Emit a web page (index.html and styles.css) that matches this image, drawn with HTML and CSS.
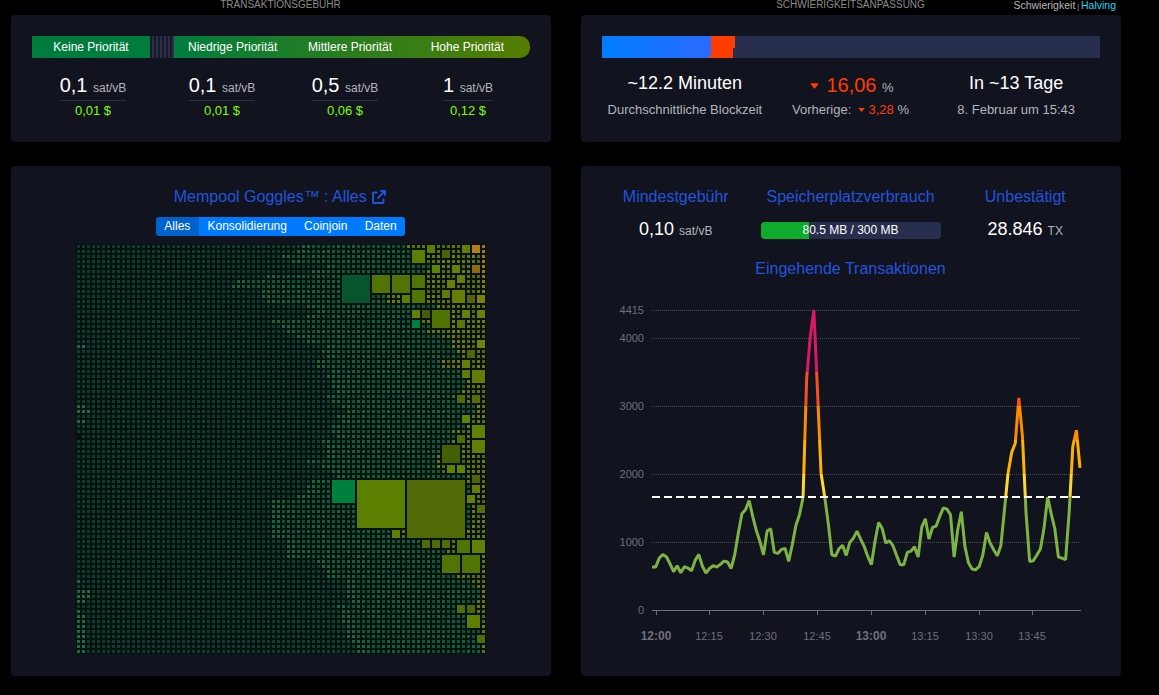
FILE: index.html
```html
<!DOCTYPE html>
<html lang="de">
<head>
  <meta charset="UTF-8">
  <meta name="viewport" content="width=device-width, initial-scale=1">
  <title>Mempool Dashboard</title>
  <link rel="stylesheet" href="styles.css">
</head>
<body>

  <div class="dashboard">

    <!-- Transaktionsgebühr -->
    <section class="col">
      <div class="main-title">TRANSAKTIONSGEBÜHR</div>
      <div class="card card-small">
        <div class="fee-bar">
          <span class="fee-none">Keine Priorität</span>
          <span class="fee-stripes"></span>
          <div class="fee-gradient">
            <span>Niedrige Priorität</span>
            <span>Mittlere Priorität</span>
            <span>Hohe Priorität</span>
          </div>
        </div>
        <div class="fee-values">
          <div class="fee"><div class="rate">0,1 <small>sat/vB</small></div><div class="fiat">0,01 $</div></div>
          <div class="fee"><div class="rate">0,1 <small>sat/vB</small></div><div class="fiat">0,01 $</div></div>
          <div class="fee"><div class="rate">0,5 <small>sat/vB</small></div><div class="fiat">0,06 $</div></div>
          <div class="fee"><div class="rate">1 <small>sat/vB</small></div><div class="fiat">0,12 $</div></div>
        </div>
      </div>
    </section>

    <!-- Schwierigkeitsanpassung -->
    <section class="col">
      <div class="main-title">SCHWIERIGKEITSANPASSUNG
        <div class="switch">Schwierigkeit <i>|</i> <a>Halving</a></div>
      </div>
      <div class="card card-small">
        <div class="diff-bar">
          <div class="diff-done"></div>
          <div class="diff-behind"></div>
        </div>
        <div class="diff-values">
          <div class="diff-item">
            <div class="big">~12.2 Minuten</div>
            <div class="sub">Durchschnittliche Blockzeit</div>
          </div>
          <div class="diff-item">
            <div class="big change"><svg class="caret" viewBox="0 0 10 6"><path d="M1 0h8q1 0 .4 .9L5.6 5.4q-.6.7-1.2 0L.6.9Q0 0 1 0z"/></svg><span class="down">16,06</span> <small>%</small></div>
            <div class="sub">Vorherige: <svg class="caret caret-sm" viewBox="0 0 10 6"><path d="M1 0h8q1 0 .4 .9L5.6 5.4q-.6.7-1.2 0L.6.9Q0 0 1 0z"/></svg> <span class="down">3,28</span> %</div>
          </div>
          <div class="diff-item">
            <div class="big">In ~13 Tage</div>
            <div class="sub">8. Februar um 15:43</div>
          </div>
        </div>
      </div>
    </section>

    <!-- Mempool Goggles -->
    <section class="card card-large goggles">
      <h5>Mempool Goggles™ : Alles
        <svg class="ext" viewBox="0 0 14 14"><path d="M5.5 2.5H1.8Q1 2.5 1 3.300V12.200Q1 13 1.800 13H10.700Q11.500 13 11.500 12.200V8.500M8.300 1H13V5.700M12.800 1.200L5.500 8.500"/></svg>
      </h5>
      <div class="btn-group">
        <button class="active">Alles</button><button>Konsolidierung</button><button>Coinjoin</button><button>Daten</button>
      </div>
      <canvas id="blocks" width="410" height="410"></canvas>
    </section>

    <!-- Eingehende Transaktionen -->
    <section class="card card-large incoming">
      <div class="stats">
        <div class="stat"><h5>Mindestgebühr</h5><div class="num">0,10 <small>sat/vB</small></div></div>
        <div class="stat">
          <h5>Speicherplatzverbrauch</h5>
          <div class="usage"><div class="usage-fill"></div><span>80.5 MB / 300 MB</span></div>
        </div>
        <div class="stat"><h5>Unbestätigt</h5><div class="num">28.846 <small>TX</small></div></div>
      </div>
      <h5 class="chart-title">Eingehende Transaktionen</h5>
      <svg id="chart" width="540" height="370"></svg>
    </section>

  </div>

  <script src="script.js"></script>
</body>
</html>
```

FILE: styles.css
```css
:root {
  --bg: #000000;
  --card: #11131f;
  --title: #2453dd;
  --track: #282f4e;
  --primary: #007bff;
  --down: #ff3d00;
  --fiat: #83fd00;
}

* {
  box-sizing: border-box;
  margin: 0;
  padding: 0;
}

body {
  background: var(--bg);
  color: #fff;
  font-family: "Liberation Sans", Arial, sans-serif;
  font-size: 13px;
  height: 695px;
  overflow: hidden;
}

.dashboard {
  display: grid;
  grid-template-columns: 540px 540px;
  column-gap: 30px;
  row-gap: 24px;
  padding-left: 11px;
}

.main-title {
  position: relative;
  height: 15px;
  padding-right: 1px;
  line-height: 10px;
  font-size: 10px;
  text-align: center;
  color: #8b8b8b;
}

.switch {
  position: absolute;
  top: 0;
  right: 5px;
  font-size: 10.5px;
  line-height: 11px;
  color: #b8b8b8;
  word-spacing: -1px;
}

.switch i {
  font-style: normal;
  font-size: 7px;
}

.switch a {
  color: #1bd8f4;
}

.card {
  background: var(--card);
  border-radius: 4px;
}

.card-small {
  height: 127px;
  padding: 21px;
}

.card-large {
  height: 510px;
}

small {
  font-size: 12px;
  color: #b4b5ba;
}

/* Gebühren */
.fee-bar {
  display: flex;
  height: 22px;
  line-height: 22px;
  font-size: 12px;
  text-align: center;
}

.fee-none {
  width: 118px;
  background: #007d3d;
}

.fee-stripes {
  width: 24px;
  background: repeating-linear-gradient(to right, #17192a 0 2px, #2c3049 2px 4px);
}

.fee-gradient {
  display: flex;
  flex: 1;
  padding-right: 4px;
  border-radius: 0 10px 10px 0;
  background: linear-gradient(to right, #007d3d, #557d00);
}

.fee-gradient span {
  flex: 1;
}

.fee-values {
  display: grid;
  grid-template-columns: 122px 136px 110px 136px;
  justify-items: center;
  padding-top: 15px;
}

.fee {
  text-align: center;
}

.rate {
  height: 28px;
  line-height: 25px;
  font-size: 20px;
  border-bottom: 1px solid #2d3040;
}

.fiat {
  line-height: 20px;
  color: var(--fiat);
}

/* Schwierigkeit */
.diff-bar {
  display: flex;
  height: 22px;
  background: var(--track);
}

.diff-done {
  width: 109px;
  background: linear-gradient(to right, #007dff, #2b69ff);
}

.diff-behind {
  width: 26px;
  margin-left: -2px;
  background: var(--down);
  clip-path: polygon(2px 0, 100% 0, 100% 12px, 24px 12px, 24px 100%, 0 100%, 0 20px, 2px 20px);
}

.diff-values {
  display: grid;
  grid-template-columns: repeat(3, 1fr);
  padding: 12px 1px 0 0;
  text-align: center;
}

.big {
  height: 30px;
  line-height: 26px;
  font-size: 18px;
  white-space: nowrap;
}

.change {
  padding-left: 3px;
  font-size: 20px;
  line-height: 30px;
}

.change small {
  font-size: 13px;
}

.sub {
  line-height: 19px;
  color: #b4b5ba;
  white-space: nowrap;
}

.down {
  color: var(--down);
}

.caret {
  width: 9px;
  height: 6px;
  margin-right: 7px;
  fill: var(--down);
  vertical-align: 3px;
}

.caret-sm {
  width: 7px;
  height: 4px;
  margin: 0 0 0 3px;
  vertical-align: 2px;
}

/* Goggles */
h5 {
  font-size: 16px;
  font-weight: normal;
  line-height: 20px;
  color: var(--title);
}

.goggles {
  display: flex;
  flex-direction: column;
  align-items: center;
  padding-top: 21px;
}

.goggles h5 {
  height: 20px;
  padding-right: 2px;
}

.ext {
  width: 14px;
  height: 14px;
  margin-left: 1px;
  vertical-align: -2px;
  fill: none;
  stroke: var(--title);
  stroke-width: 1.9;
}

.btn-group {
  display: flex;
  height: 19px;
  margin: 10px 1px 8px 0;
  border-radius: 3px;
  overflow: hidden;
}

.btn-group button {
  padding: 0 8.6px 1px;
  border: 0;
  background: var(--primary);
  color: #fff;
  font: 12px/18px "Liberation Sans", Arial, sans-serif;
}

.btn-group .active {
  background: #0062cc;
}

/* Eingehende Transaktionen */
.incoming {
  padding-top: 21px;
}

.stats {
  display: grid;
  grid-template-columns: repeat(3, 1fr);
  height: 72px;
  padding: 0 11px 0 10px;
  text-align: center;
}

.num {
  padding-top: 10px;
  line-height: 24px;
  font-size: 18px;
}

.usage {
  position: relative;
  width: 180px;
  height: 17px;
  margin: 15px auto 0;
  border-radius: 4px;
  background: var(--track);
  overflow: hidden;
  font-size: 12px;
  line-height: 16px;
}

.usage-fill {
  width: 48px;
  height: 17px;
  background: #0fab2c;
}

.usage span {
  position: absolute;
  inset: 0;
}

.chart-title {
  padding-right: 1px;
  text-align: center;
}

#chart {
  display: block;
  margin-top: 11px;
  font-family: "Liberation Sans", Arial, sans-serif;
}

#chart text {
  font-size: 11px;
  fill: #6e7079;
}

#chart .hour {
  font-size: 12px;
  font-weight: bold;
}
```

FILE: script.js
```js
// ---- Mempool Goggles ----
const CELL = 5;
const SIZE = 82;
const ctx = document.getElementById("blocks").getContext("2d");

// größere Transaktionen: [Spalte, Zeile, Größe, Farbe]
const big = [
  [67, 1, 3, "#5b7f04"], [70, 0, 2, "#5b7f04"], [73, 1, 2, "#4b6207"], [77, 0, 2, "#667b08"],
  [79, 0, 2, "#b07f15"], [71, 4, 2, "#5f8405"], [75, 4, 2, "#667f08"], [79, 4, 2, "#926a14"],
  [53, 6, 6, "#06552f"], [59, 6, 4, "#517404"], [63, 6, 4, "#517404"], [67, 6, 3, "#517404"],
  [67, 9, 3, "#517404"], [65, 10, 2, "#5b7f04"], [76, 6, 2, "#6b7a0a"], [74, 7, 2, "#667f08"],
  [73, 9, 2, "#5f7c05"], [75, 9, 3, "#677d05"], [78, 10, 2, "#58600c"], [80, 10, 2, "#7e800c"],
  [67, 13, 2, "#5f8405"], [69, 13, 2, "#465b08"], [71, 13, 4, "#507204"], [67, 15, 2, "#00823f"],
  [77, 13, 2, "#667f08"], [80, 13, 2, "#707d08"], [76, 15, 2, "#5d750a"], [80, 19, 2, "#75800a"],
  [78, 21, 2, "#4f6507"], [77, 23, 2, "#667f05"], [77, 25, 2, "#5f7d05"], [79, 25, 3, "#637c04"],
  [76, 30, 2, "#4f6a07"], [79, 30, 2, "#556c07"], [77, 34, 2, "#5f8405"], [79, 36, 3, "#617f04"],
  [76, 38, 2, "#4d6c06"], [79, 39, 3, "#617f04"], [73, 40, 4, "#455f05"], [74, 44, 2, "#5b8205"],
  [76, 44, 2, "#5f8405"], [51, 47, 5, "#00803f"], [56, 47, 10, "#5d7f00"], [66, 47, 12, "#4f6a06"],
  [79, 46, 2, "#4f6507"], [79, 48, 2, "#667d07"], [78, 50, 2, "#667d07"], [80, 52, 2, "#556c07"],
  [63, 57, 2, "#5f7f05"], [69, 59, 2, "#4f6c06"], [71, 59, 2, "#4f6c06"], [73, 59, 2, "#4f6c06"],
  [76, 59, 3, "#517404"], [79, 59, 3, "#617f04"], [73, 62, 4, "#517404"], [77, 62, 4, "#517404"],
  [76, 72, 2, "#4f7006"], [78, 72, 2, "#4f6507"], [78, 74, 3, "#5f7f04"], [80, 78, 2, "#4f6c06"]
];

// erste grüne Spalte je Zeile
const green = [
  45, 44, 41, 43, 50, 47, 38, 32, 31, 37, 37, 38, 46, 48, 46, 39, 41, 42, 44, 46,
  50, 49, 50, 48, 48, 51, 50, 51, 51, 52, 50, 51, 53, 54, 52, 53, 51, 51, 52, 49,
  50, 50, 50, 46, 49, 51, 52, 47, 46, 46, 44, 39, 39, 39, 39, 39, 39, 39, 39, 42,
  42, 42, 42, 48, 49, 50, 50, 54, 54, 54, 54, 55, 52, 53, 53, 53, 54, 54, 54, 55, 56, 56
];

// erste olivfarbene Spalte je Zeile
const olive = [
  66, 67, 69, 70, 71, 70, 59, 59, 59, 59, 62, 62, 72, 67, 67, 69, 71, 70, 73, 75,
  75, 76, 77, 73, 73, 77, 79, 78, 78, 77, 75, 76, 80, 80, 77, 79, 78, 75, 76, 75,
  73, 73, 72, 72, 72, 73, 78, 78, 79, 79, 78, 78, 79, 79, 79, 79, 79, 65, 65, 69,
  75, 74, 73, 77, 77, 81, 76, 79, 80, 81, 81, 80, 80, 80, 81, 81, 80, 81, 80, 81, 81, 81
];

// einzelne hellere Zellen am linken Rand
const edge = {
  20: 2, 32: 2, 33: 3, 35: 2, 67: 1, 69: 3, 70: 3, 71: 2, 73: 1,
  74: 2, 75: 2, 76: 2, 77: 2, 78: 2, 79: 2, 80: 2, 81: 2
};

function noise(x, y) {
  const n = Math.sin(x * 12.9898 + y * 78.233) * 43758.5453;
  return n - Math.floor(n);
}

function cellColor(x, y) {
  const n = noise(x, y);
  if (x < edge[y]) return "#146f46";
  if (x >= olive[y]) {
    if (x === 81 && y < 12) return y < 6 ? "#a87414" : "#8c7a10";
    return `rgb(${84 + n * 30}, ${102 + n * 26}, ${8 + n * 6})`;
  }
  if (x >= green[y]) {
    if (x - green[y] < 2) return "#14683c";
    return `rgb(${10 + n * 8}, ${80 + n * 20}, ${50 + n * 10})`;
  }
  const t = Math.max(0, (x - 30) / 30);
  return `rgb(14, ${56 + t * 9 + n * 5}, ${45 + n * 4})`;
}

ctx.fillStyle = "#04110f";
ctx.fillRect(0, 0, 410, 410);
const used = new Set();
big.forEach(([x, y, s, color]) => {
  ctx.fillStyle = color;
  ctx.fillRect(x * CELL + 1, y * CELL + 1, s * CELL - 2, s * CELL - 2);
  for (let i = 0; i < s; i++)
    for (let j = 0; j < s; j++) used.add((x + i) + "," + (y + j));
});
for (let y = 0; y < SIZE; y++) {
  for (let x = 0; x < SIZE; x++) {
    if (used.has(x + "," + y) || (x === 0 && y === 38)) continue;
    ctx.fillStyle = cellColor(x, y);
    ctx.fillRect(x * CELL + 1, y * CELL + 1, CELL - 2, CELL - 2);
  }
}

// ---- Eingehende Transaktionen, ein Wert pro Minute ab 11:59 ----
const data = [
  632, 632, 760, 818, 784, 681, 564, 652, 549, 637, 617, 578, 730, 818, 647, 544, 612, 652, 632, 671,
  720, 706, 612, 813, 1132, 1416, 1475, 1612, 1377, 1171, 1009, 813, 1161, 1196, 848, 833, 892, 906, 715, 960,
  1245, 1401, 1660, 3410, 4023, 4415, 3239, 2014, 1671, 1279, 813, 794, 901, 951, 804, 995, 1058, 1161, 1044, 936,
  789, 666, 1009, 1289, 1200, 985, 1019, 946, 804, 666, 666, 848, 867, 931, 779, 1220, 1343, 1044, 1215, 1235,
  1377, 1504, 1485, 1401, 779, 1181, 1446, 936, 691, 603, 593, 642, 813, 1142, 985, 887, 799, 946, 1475, 2014,
  2318, 2455, 3121, 2553, 1426, 715, 725, 809, 897, 1205, 1661, 1416, 1196, 779, 764, 740, 1450, 2406, 2646, 2092
];

const LEFT = 71;
const RIGHT = 499;
const BASE = 320;
const px = i => LEFT + i * (RIGHT - LEFT) / (data.length - 1);
const py = v => BASE - v * 300 / 4415;

const levels = [[0, 1667, "#7cb342"], [1667, 2000, "#fdd835"], [2000, 2500, "#ffb300"],
  [2500, 3000, "#fb8c00"], [3000, 3500, "#f4511e"], [3500, 4415, "#d81b60"]];
let svg = `<defs><linearGradient id="levels" gradientUnits="userSpaceOnUse" x1="0" y1="${BASE}" x2="0" y2="${py(4415)}">`;
levels.forEach(([from, to, c]) => {
  svg += `<stop offset="${from / 4415}" stop-color="${c}"/><stop offset="${to / 4415}" stop-color="${c}"/>`;
});
svg += "</linearGradient></defs>";

[0, 1000, 2000, 3000, 4000, 4415].forEach(v => {
  const y = Math.round(py(v)) + 0.5;
  svg += `<text x="63" y="${y + 3.5}" text-anchor="end">${v}</text>`;
  svg += v === 0
    ? `<path d="M${LEFT} ${y}H${RIGHT + 1}" stroke="#6e7079"/>`
    : `<path d="M${LEFT} ${y}H${RIGHT}" stroke="#484b57" stroke-dasharray="1 1"/>`;
});

["12:00", "12:15", "12:30", "12:45", "13:00", "13:15", "13:30", "13:45"].forEach((t, i) => {
  const x = Math.floor(75 + i * 53.85) + 0.5;
  svg += `<path d="M${x} ${BASE + 1}V${BASE + 5}" stroke="#6e7079"/>`;
  svg += `<text x="${x - 0.5}" y="${BASE + 30}" text-anchor="middle" class="${t.endsWith("00") ? "hour" : ""}">${t}</text>`;
});

svg += `<polyline points="${data.map((v, i) => px(i) + "," + py(v)).join(" ")}" fill="none" stroke="url(#levels)" stroke-width="3" stroke-linejoin="bevel"/>`;
svg += `<path d="M${LEFT} ${Math.round(py(1667))}H${RIGHT}" stroke="#fff" stroke-width="2" stroke-dasharray="8 4"/>`;
document.getElementById("chart").innerHTML = svg;
```
